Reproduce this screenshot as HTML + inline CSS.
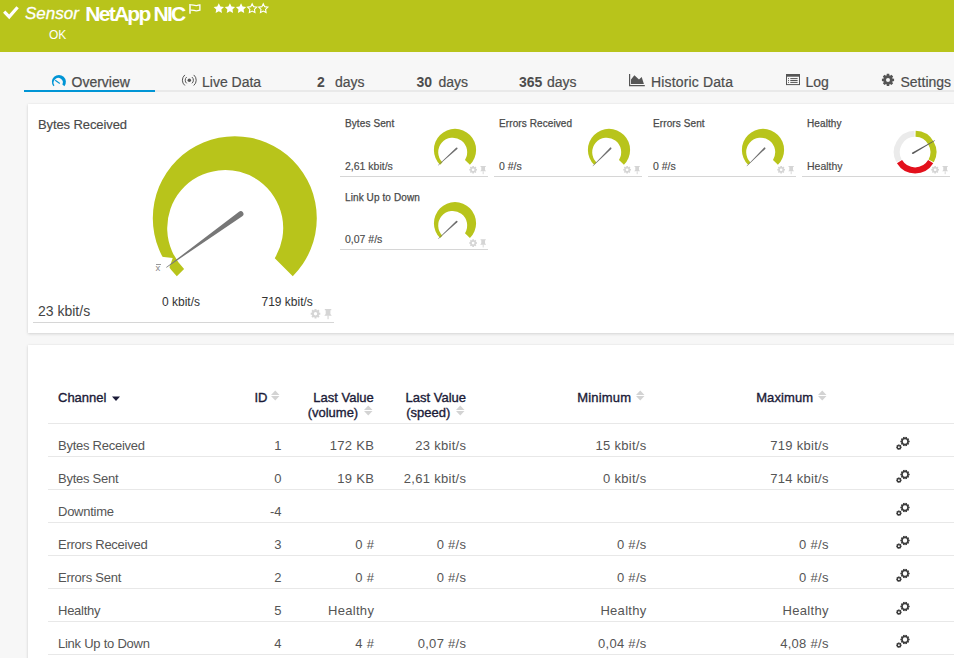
<!DOCTYPE html>
<html><head><meta charset="utf-8"><style>
html,body{margin:0;padding:0;width:954px;height:658px;overflow:hidden;background:#f7f7f7;position:relative;font-family:"Liberation Sans", sans-serif}
.t{position:absolute;white-space:nowrap;font-family:"Liberation Sans", sans-serif}
svg{position:absolute}
</style></head><body>
<div style="position:absolute;left:0px;top:0px;width:954px;height:52px;background:#b8c41b"></div>
<svg style="position:absolute;left:0px;top:0px;overflow:visible" width="30" height="30" viewBox="0 0 30 30"><polyline points="4.2,11.6 9.2,16.8 17.6,7.2" fill="none" stroke="#fff" stroke-width="3.2" stroke-linecap="butt" stroke-linejoin="miter"/></svg>
<div class="t" style="left:25px;top:4.11px;font-size:17px;line-height:20px;font-weight:400;color:#fff;font-style:italic;-webkit-text-stroke:0.3px #fff">Sensor</div>
<div class="t" style="left:85.3px;top:1.22px;font-size:21px;line-height:25px;font-weight:700;color:#fff;font-style:normal;letter-spacing:-1.75px;">NetApp NIC</div>
<svg style="position:absolute;left:0px;top:0px;overflow:visible" width="300" height="20" viewBox="0 0 300 20"><path d="M190,4 V13.8" stroke="#fff" stroke-width="1.5"/><path d="M190.5,5 C192.5,4.2 194,5.8 196.5,5.6 C198,5.5 199,4.9 199.9,4.9 V10.2 C198.5,10.6 197.5,10.9 196,10.8 C194,10.6 192.5,9.6 190.5,10.2" fill="none" stroke="#fff" stroke-width="1.3"/></svg>
<svg style="position:absolute;left:0px;top:0px;overflow:visible" width="300" height="20" viewBox="0 0 300 20"><polygon points="218.80,3.20 217.21,6.42 213.66,6.93 216.23,9.43 215.63,12.97 218.80,11.30 221.97,12.97 221.37,9.43 223.94,6.93 220.39,6.42" fill="#fff"/><polygon points="229.92,3.20 228.33,6.42 224.78,6.93 227.35,9.43 226.75,12.97 229.92,11.30 233.09,12.97 232.49,9.43 235.06,6.93 231.51,6.42" fill="#fff"/><polygon points="241.04,3.20 239.45,6.42 235.90,6.93 238.47,9.43 237.87,12.97 241.04,11.30 244.21,12.97 243.61,9.43 246.18,6.93 242.63,6.42" fill="#fff"/><polygon points="252.16,3.80 250.75,6.66 247.59,7.12 249.88,9.34 249.34,12.48 252.16,11.00 254.98,12.48 254.44,9.34 256.73,7.12 253.57,6.66" fill="none" stroke="#fff" stroke-width="1.1"/><polygon points="263.28,3.80 261.87,6.66 258.71,7.12 261.00,9.34 260.46,12.48 263.28,11.00 266.10,12.48 265.56,9.34 267.85,7.12 264.69,6.66" fill="none" stroke="#fff" stroke-width="1.1"/></svg>
<div class="t" style="left:49px;top:27.84px;font-size:12px;line-height:14px;font-weight:400;color:#fff;font-style:normal;">OK</div>
<div style="position:absolute;left:24px;top:90px;width:930px;height:2px;background:#e9e9e9"></div>
<div style="position:absolute;left:24px;top:90px;width:131px;height:2px;background:#0095d5"></div>
<svg style="position:absolute;left:0px;top:0px;overflow:visible" width="954" height="100" viewBox="0 0 954 100"><path d="M53.38,86.21 A7.0,7.0 0 1 1 64.42,86.21 L62.35,84.59 A4.6,4.6 0 1 0 54.50,85.34 Z" fill="#0095d5"/><path d="M55.2,80.2 L59.8,83.5" stroke="#0095d5" stroke-width="1.1"/></svg>
<div class="t" style="left:71.5px;top:73.65px;font-size:14px;line-height:17px;font-weight:400;color:#4d4d4d;font-style:normal;-webkit-text-stroke:0.25px #4d4d4d">Overview</div>
<svg style="position:absolute;left:0px;top:0px;overflow:visible" width="300" height="100" viewBox="0 0 300 100"><circle cx="189.3" cy="80.2" r="1.75" fill="#555"/><path d="M186.66,77.06 A4.1,4.1 0 0 0 186.66,83.34" fill="none" stroke="#555" stroke-width="1.0"/><path d="M191.94,77.06 A4.1,4.1 0 0 1 191.94,83.34" fill="none" stroke="#555" stroke-width="1.0"/><path d="M184.86,74.91 A6.9,6.9 0 0 0 184.86,85.49" fill="none" stroke="#555" stroke-width="1.0"/><path d="M193.74,74.91 A6.9,6.9 0 0 1 193.74,85.49" fill="none" stroke="#555" stroke-width="1.0"/></svg>
<div class="t" style="left:202px;top:73.65px;font-size:14px;line-height:17px;font-weight:400;color:#4d4d4d;font-style:normal;-webkit-text-stroke:0.2px #4d4d4d">Live Data</div>
<div class="t" style="left:317px;top:73.65px;font-size:14px;line-height:17px;font-weight:700;color:#4d4d4d;font-style:normal;">2</div>
<div class="t" style="left:335px;top:73.65px;font-size:14px;line-height:17px;font-weight:400;color:#4d4d4d;font-style:normal;-webkit-text-stroke:0.2px #4d4d4d">days</div>
<div class="t" style="left:416.5px;top:73.65px;font-size:14px;line-height:17px;font-weight:700;color:#4d4d4d;font-style:normal;">30</div>
<div class="t" style="left:438.5px;top:73.65px;font-size:14px;line-height:17px;font-weight:400;color:#4d4d4d;font-style:normal;-webkit-text-stroke:0.2px #4d4d4d">days</div>
<div class="t" style="left:519px;top:73.65px;font-size:14px;line-height:17px;font-weight:700;color:#4d4d4d;font-style:normal;">365</div>
<div class="t" style="left:547px;top:73.65px;font-size:14px;line-height:17px;font-weight:400;color:#4d4d4d;font-style:normal;-webkit-text-stroke:0.2px #4d4d4d">days</div>
<svg style="position:absolute;left:0px;top:0px;overflow:visible" width="954" height="100" viewBox="0 0 954 100"><path d="M629.6,74 V85.6 H644.8" fill="none" stroke="#555" stroke-width="1.2"/><path d="M631,84 V79.5 L634.4,75.3 L639,79.5 L641.7,77 L643.9,84 Z" fill="#555"/></svg>
<div class="t" style="left:651px;top:73.65px;font-size:14px;line-height:17px;font-weight:400;color:#4d4d4d;font-style:normal;letter-spacing:0.15px;-webkit-text-stroke:0.2px #4d4d4d">Historic Data</div>
<svg style="position:absolute;left:0px;top:0px;overflow:visible" width="954" height="100" viewBox="0 0 954 100"><rect x="786.5" y="74.8" width="13" height="9.8" fill="none" stroke="#555" stroke-width="1"/><rect x="786" y="74" width="14" height="2.7" fill="#555"/><rect x="788" y="78.1" width="1" height="1" fill="#666"/><rect x="790.3" y="78.1" width="7.3" height="1" fill="#555"/><rect x="788" y="80.0" width="1" height="1" fill="#666"/><rect x="790.3" y="80.0" width="7.3" height="1" fill="#555"/><rect x="788" y="81.9" width="1" height="1" fill="#666"/><rect x="790.3" y="81.9" width="7.3" height="1" fill="#555"/></svg>
<div class="t" style="left:805.5px;top:73.65px;font-size:14px;line-height:17px;font-weight:400;color:#4d4d4d;font-style:normal;-webkit-text-stroke:0.2px #4d4d4d">Log</div>
<svg style="position:absolute;left:880px;top:72px;overflow:visible" width="16" height="16" viewBox="0 0 16 16"><path d="M12.35,6.41 L14.08,6.68 L14.08,9.12 L12.35,9.39 L12.13,9.92 L13.16,11.34 L11.44,13.06 L10.02,12.03 L9.49,12.25 L9.22,13.98 L6.78,13.98 L6.51,12.25 L5.98,12.03 L4.56,13.06 L2.84,11.34 L3.87,9.92 L3.65,9.39 L1.92,9.12 L1.92,6.68 L3.65,6.41 L3.87,5.88 L2.84,4.46 L4.56,2.74 L5.98,3.77 L6.51,3.55 L6.78,1.82 L9.22,1.82 L9.49,3.55 L10.02,3.77 L11.44,2.74 L13.16,4.46 L12.13,5.88 Z M10.0,7.9 A2.0,2.0 0 1 0 6.0,7.9 A2.0,2.0 0 1 0 10.0,7.9 Z" fill="#555" fill-rule="evenodd"/></svg>
<div class="t" style="left:900.5px;top:73.65px;font-size:14px;line-height:17px;font-weight:400;color:#4d4d4d;font-style:normal;-webkit-text-stroke:0.2px #4d4d4d">Settings</div>
<div style="position:absolute;left:28px;top:104px;width:940px;height:229px;background:#fff;box-shadow:0 1px 3px rgba(0,0,0,0.14),0 0 2px rgba(0,0,0,0.04)"></div>
<div style="position:absolute;left:28px;top:345px;width:940px;height:330px;background:#fff;box-shadow:0 1px 3px rgba(0,0,0,0.14),0 0 2px rgba(0,0,0,0.04)"></div>
<div class="t" style="left:38px;top:117.00px;font-size:13px;line-height:15px;font-weight:400;color:#4a4a4a;font-style:normal;letter-spacing:-0.1px;-webkit-text-stroke:0.15px #4a4a4a">Bytes Received</div>
<svg style="position:absolute;left:0px;top:0px;overflow:visible" width="954" height="658" viewBox="0 0 954 658"><path d="M176.82,276.18 A82,82 0 1 1 292.78,276.18 L274.75,258.15 A58,58 0 1 0 184.09,268.91 Z" fill="#b8c41b"/><path d="M172.7,258.1 L159.5,256.4 L168.3,270.8 Z" fill="#fff"/><path d="M166.11,267.25 L239.01,211.72 A2.8,2.8 0 0 1 242.28,216.27 L166.41,267.65 Z" fill="#777"/></svg>
<div class="t" style="left:155.6px;top:262.21px;font-size:9.5px;line-height:11px;font-weight:400;color:#888;font-style:normal;">x</div>
<div style="position:absolute;left:155.5px;top:263.6px;width:5.5px;height:0.9px;background:#999"></div>
<div class="t" style="left:162px;top:294.84px;font-size:12px;line-height:14px;font-weight:400;color:#333;font-style:normal;">0 kbit/s</div>
<div class="t" style="left:261.5px;top:294.84px;font-size:12px;line-height:14px;font-weight:400;color:#333;font-style:normal;">719 kbit/s</div>
<div class="t" style="left:38px;top:302.65px;font-size:14px;line-height:17px;font-weight:400;color:#444;font-style:normal;">23 kbit/s</div>
<div style="position:absolute;left:33px;top:322px;width:301px;height:1px;background:#d6d6d6"></div>
<svg style="position:absolute;left:0px;top:0px;overflow:visible" width="954" height="658" viewBox="0 0 954 658"><g transform="translate(310.6,309) scale(1.0)"><path d="M8.31,3.53 L9.70,3.74 L9.70,5.66 L8.31,5.87 L8.13,6.28 L8.98,7.42 L7.62,8.78 L6.48,7.93 L6.07,8.11 L5.86,9.50 L3.94,9.50 L3.73,8.11 L3.32,7.93 L2.18,8.78 L0.82,7.42 L1.67,6.28 L1.49,5.87 L0.10,5.66 L0.10,3.74 L1.49,3.53 L1.67,3.12 L0.82,1.98 L2.18,0.62 L3.32,1.47 L3.73,1.29 L3.94,-0.10 L5.86,-0.10 L6.07,1.29 L6.48,1.47 L7.62,0.62 L8.98,1.98 L8.13,3.12 Z M6.6000000000000005,4.7 A1.7,1.7 0 1 0 3.2,4.7 A1.7,1.7 0 1 0 6.6000000000000005,4.7 Z" fill="#d5d5d5" fill-rule="evenodd"/><g transform="translate(13.7,0)"><path d="M0.5,0 H7 V1.3 H6.1 V5 L7.5,6.7 H0 L1.4,5 V1.3 H0.5 Z" fill="#d5d5d5"/><rect x="3.2" y="6.6" width="1.1" height="3.6" fill="#d5d5d5"/></g></g></svg>
<div class="t" style="left:345px;top:118.23px;font-size:10px;line-height:12px;font-weight:400;color:#4a4a4a;font-style:normal;letter-spacing:0.1px;-webkit-text-stroke:0.25px #4a4a4a">Bytes Sent</div>
<div class="t" style="left:345px;top:159.86px;font-size:10.5px;line-height:13px;font-weight:400;color:#4a4a4a;font-style:normal;-webkit-text-stroke:0.15px #4a4a4a">2,61 kbit/s</div>
<div style="position:absolute;left:340px;top:176px;width:148px;height:1px;background:#d6d6d6"></div>
<svg style="position:absolute;left:0px;top:0px;overflow:visible" width="954" height="658" viewBox="0 0 954 658"><path d="M440.08,164.82 A21.1,21.1 0 1 1 469.92,164.82 L464.99,159.89 A14.5,14.5 0 1 0 442.45,162.45 Z" fill="#b8c41b"/><path d="M437.91,165.29 L456.09,147.68 A0.9,0.9 0 0 1 457.30,149.01 L438.18,165.59 Z" fill="#6e6e6e"/></svg>
<svg style="position:absolute;left:0px;top:0px;overflow:visible" width="954" height="658" viewBox="0 0 954 658"><g transform="translate(469.2,166) scale(0.8)"><path d="M8.31,3.53 L9.70,3.74 L9.70,5.66 L8.31,5.87 L8.13,6.28 L8.98,7.42 L7.62,8.78 L6.48,7.93 L6.07,8.11 L5.86,9.50 L3.94,9.50 L3.73,8.11 L3.32,7.93 L2.18,8.78 L0.82,7.42 L1.67,6.28 L1.49,5.87 L0.10,5.66 L0.10,3.74 L1.49,3.53 L1.67,3.12 L0.82,1.98 L2.18,0.62 L3.32,1.47 L3.73,1.29 L3.94,-0.10 L5.86,-0.10 L6.07,1.29 L6.48,1.47 L7.62,0.62 L8.98,1.98 L8.13,3.12 Z M6.6000000000000005,4.7 A1.7,1.7 0 1 0 3.2,4.7 A1.7,1.7 0 1 0 6.6000000000000005,4.7 Z" fill="#d5d5d5" fill-rule="evenodd"/><g transform="translate(13.7,0)"><path d="M0.5,0 H7 V1.3 H6.1 V5 L7.5,6.7 H0 L1.4,5 V1.3 H0.5 Z" fill="#d5d5d5"/><rect x="3.2" y="6.6" width="1.1" height="3.6" fill="#d5d5d5"/></g></g></svg>
<div class="t" style="left:499px;top:118.23px;font-size:10px;line-height:12px;font-weight:400;color:#4a4a4a;font-style:normal;letter-spacing:0.1px;-webkit-text-stroke:0.25px #4a4a4a">Errors Received</div>
<div class="t" style="left:499px;top:159.86px;font-size:10.5px;line-height:13px;font-weight:400;color:#4a4a4a;font-style:normal;-webkit-text-stroke:0.15px #4a4a4a">0 #/s</div>
<div style="position:absolute;left:494px;top:176px;width:148px;height:1px;background:#d6d6d6"></div>
<svg style="position:absolute;left:0px;top:0px;overflow:visible" width="954" height="658" viewBox="0 0 954 658"><path d="M594.08,164.82 A21.1,21.1 0 1 1 623.92,164.82 L618.99,159.89 A14.5,14.5 0 1 0 596.45,162.45 Z" fill="#b8c41b"/><path d="M592.60,166.02 L609.99,147.64 A0.9,0.9 0 0 1 611.26,148.91 L592.88,166.30 Z" fill="#6e6e6e"/></svg>
<svg style="position:absolute;left:0px;top:0px;overflow:visible" width="954" height="658" viewBox="0 0 954 658"><g transform="translate(623.2,166) scale(0.8)"><path d="M8.31,3.53 L9.70,3.74 L9.70,5.66 L8.31,5.87 L8.13,6.28 L8.98,7.42 L7.62,8.78 L6.48,7.93 L6.07,8.11 L5.86,9.50 L3.94,9.50 L3.73,8.11 L3.32,7.93 L2.18,8.78 L0.82,7.42 L1.67,6.28 L1.49,5.87 L0.10,5.66 L0.10,3.74 L1.49,3.53 L1.67,3.12 L0.82,1.98 L2.18,0.62 L3.32,1.47 L3.73,1.29 L3.94,-0.10 L5.86,-0.10 L6.07,1.29 L6.48,1.47 L7.62,0.62 L8.98,1.98 L8.13,3.12 Z M6.6000000000000005,4.7 A1.7,1.7 0 1 0 3.2,4.7 A1.7,1.7 0 1 0 6.6000000000000005,4.7 Z" fill="#d5d5d5" fill-rule="evenodd"/><g transform="translate(13.7,0)"><path d="M0.5,0 H7 V1.3 H6.1 V5 L7.5,6.7 H0 L1.4,5 V1.3 H0.5 Z" fill="#d5d5d5"/><rect x="3.2" y="6.6" width="1.1" height="3.6" fill="#d5d5d5"/></g></g></svg>
<div class="t" style="left:653px;top:118.23px;font-size:10px;line-height:12px;font-weight:400;color:#4a4a4a;font-style:normal;letter-spacing:0.1px;-webkit-text-stroke:0.25px #4a4a4a">Errors Sent</div>
<div class="t" style="left:653px;top:159.86px;font-size:10.5px;line-height:13px;font-weight:400;color:#4a4a4a;font-style:normal;-webkit-text-stroke:0.15px #4a4a4a">0 #/s</div>
<div style="position:absolute;left:648px;top:176px;width:148px;height:1px;background:#d6d6d6"></div>
<svg style="position:absolute;left:0px;top:0px;overflow:visible" width="954" height="658" viewBox="0 0 954 658"><path d="M748.08,164.82 A21.1,21.1 0 1 1 777.92,164.82 L772.99,159.89 A14.5,14.5 0 1 0 750.45,162.45 Z" fill="#b8c41b"/><path d="M746.60,166.02 L763.99,147.64 A0.9,0.9 0 0 1 765.26,148.91 L746.88,166.30 Z" fill="#6e6e6e"/></svg>
<svg style="position:absolute;left:0px;top:0px;overflow:visible" width="954" height="658" viewBox="0 0 954 658"><g transform="translate(777.2,166) scale(0.8)"><path d="M8.31,3.53 L9.70,3.74 L9.70,5.66 L8.31,5.87 L8.13,6.28 L8.98,7.42 L7.62,8.78 L6.48,7.93 L6.07,8.11 L5.86,9.50 L3.94,9.50 L3.73,8.11 L3.32,7.93 L2.18,8.78 L0.82,7.42 L1.67,6.28 L1.49,5.87 L0.10,5.66 L0.10,3.74 L1.49,3.53 L1.67,3.12 L0.82,1.98 L2.18,0.62 L3.32,1.47 L3.73,1.29 L3.94,-0.10 L5.86,-0.10 L6.07,1.29 L6.48,1.47 L7.62,0.62 L8.98,1.98 L8.13,3.12 Z M6.6000000000000005,4.7 A1.7,1.7 0 1 0 3.2,4.7 A1.7,1.7 0 1 0 6.6000000000000005,4.7 Z" fill="#d5d5d5" fill-rule="evenodd"/><g transform="translate(13.7,0)"><path d="M0.5,0 H7 V1.3 H6.1 V5 L7.5,6.7 H0 L1.4,5 V1.3 H0.5 Z" fill="#d5d5d5"/><rect x="3.2" y="6.6" width="1.1" height="3.6" fill="#d5d5d5"/></g></g></svg>
<div class="t" style="left:807px;top:118.23px;font-size:10px;line-height:12px;font-weight:400;color:#4a4a4a;font-style:normal;letter-spacing:0.1px;-webkit-text-stroke:0.25px #4a4a4a">Healthy</div>
<div class="t" style="left:807px;top:159.86px;font-size:10.5px;line-height:13px;font-weight:400;color:#4a4a4a;font-style:normal;-webkit-text-stroke:0.15px #4a4a4a">Healthy</div>
<div style="position:absolute;left:802px;top:176px;width:148px;height:1px;background:#d6d6d6"></div>
<svg style="position:absolute;left:0px;top:0px;overflow:visible" width="954" height="658" viewBox="0 0 954 658"><path d="M899.02,160.83 A18.3,18.3 0 0 1 914.62,133.81" fill="none" stroke="#ebebeb" stroke-width="6"/><path d="M915.58,133.81 A18.3,18.3 0 0 1 931.18,160.83" fill="none" stroke="#b8c41b" stroke-width="6"/><path d="M930.70,161.66 A18.3,18.3 0 0 1 899.50,161.66" fill="none" stroke="#e3101c" stroke-width="6"/><path d="M934.93,140.79 L913.16,153.89 A0.85,0.85 0 0 1 912.32,152.41 L934.63,140.27 Z" fill="#5a5a5a"/></svg>
<svg style="position:absolute;left:0px;top:0px;overflow:visible" width="954" height="658" viewBox="0 0 954 658"><g transform="translate(931.2,166) scale(0.8)"><path d="M8.31,3.53 L9.70,3.74 L9.70,5.66 L8.31,5.87 L8.13,6.28 L8.98,7.42 L7.62,8.78 L6.48,7.93 L6.07,8.11 L5.86,9.50 L3.94,9.50 L3.73,8.11 L3.32,7.93 L2.18,8.78 L0.82,7.42 L1.67,6.28 L1.49,5.87 L0.10,5.66 L0.10,3.74 L1.49,3.53 L1.67,3.12 L0.82,1.98 L2.18,0.62 L3.32,1.47 L3.73,1.29 L3.94,-0.10 L5.86,-0.10 L6.07,1.29 L6.48,1.47 L7.62,0.62 L8.98,1.98 L8.13,3.12 Z M6.6000000000000005,4.7 A1.7,1.7 0 1 0 3.2,4.7 A1.7,1.7 0 1 0 6.6000000000000005,4.7 Z" fill="#d5d5d5" fill-rule="evenodd"/><g transform="translate(13.7,0)"><path d="M0.5,0 H7 V1.3 H6.1 V5 L7.5,6.7 H0 L1.4,5 V1.3 H0.5 Z" fill="#d5d5d5"/><rect x="3.2" y="6.6" width="1.1" height="3.6" fill="#d5d5d5"/></g></g></svg>
<div class="t" style="left:345px;top:191.53px;font-size:10px;line-height:12px;font-weight:400;color:#4a4a4a;font-style:normal;letter-spacing:0.1px;-webkit-text-stroke:0.25px #4a4a4a">Link Up to Down</div>
<div class="t" style="left:345px;top:233.16px;font-size:10.5px;line-height:13px;font-weight:400;color:#4a4a4a;font-style:normal;-webkit-text-stroke:0.15px #4a4a4a">0,07 #/s</div>
<div style="position:absolute;left:340px;top:249.3px;width:148px;height:1px;background:#d6d6d6"></div>
<svg style="position:absolute;left:0px;top:0px;overflow:visible" width="954" height="658" viewBox="0 0 954 658"><path d="M440.08,238.12 A21.1,21.1 0 1 1 469.92,238.12 L464.99,233.19 A14.5,14.5 0 1 0 442.45,235.75 Z" fill="#b8c41b"/><path d="M438.04,238.74 L456.07,220.97 A0.9,0.9 0 0 1 457.30,222.29 L438.32,239.03 Z" fill="#6e6e6e"/></svg>
<svg style="position:absolute;left:0px;top:0px;overflow:visible" width="954" height="658" viewBox="0 0 954 658"><g transform="translate(469.2,239.3) scale(0.8)"><path d="M8.31,3.53 L9.70,3.74 L9.70,5.66 L8.31,5.87 L8.13,6.28 L8.98,7.42 L7.62,8.78 L6.48,7.93 L6.07,8.11 L5.86,9.50 L3.94,9.50 L3.73,8.11 L3.32,7.93 L2.18,8.78 L0.82,7.42 L1.67,6.28 L1.49,5.87 L0.10,5.66 L0.10,3.74 L1.49,3.53 L1.67,3.12 L0.82,1.98 L2.18,0.62 L3.32,1.47 L3.73,1.29 L3.94,-0.10 L5.86,-0.10 L6.07,1.29 L6.48,1.47 L7.62,0.62 L8.98,1.98 L8.13,3.12 Z M6.6000000000000005,4.7 A1.7,1.7 0 1 0 3.2,4.7 A1.7,1.7 0 1 0 6.6000000000000005,4.7 Z" fill="#d5d5d5" fill-rule="evenodd"/><g transform="translate(13.7,0)"><path d="M0.5,0 H7 V1.3 H6.1 V5 L7.5,6.7 H0 L1.4,5 V1.3 H0.5 Z" fill="#d5d5d5"/><rect x="3.2" y="6.6" width="1.1" height="3.6" fill="#d5d5d5"/></g></g></svg>
<div class="t" style="left:58px;top:390.00px;font-size:13px;line-height:15px;font-weight:400;color:#1b1b38;font-style:normal;-webkit-text-stroke:0.35px #1b1b38">Channel</div>
<svg style="position:absolute;left:110.5px;top:396px;overflow:visible" width="10" height="6" viewBox="0 0 10 6"><path d="M1,0.5 H9 L5,5 Z" fill="#1b1b38"/></svg>
<div class="t" style="left:254.5px;top:390.00px;font-size:13px;line-height:15px;font-weight:400;color:#1b1b38;font-style:normal;-webkit-text-stroke:0.35px #1b1b38">ID</div>
<svg style="position:absolute;left:271px;top:390px" width="9" height="12"><path d="M0,4.9 L4.25,0.4 L8.5,4.9 Z M0,5.9 L4.25,10.6 L8.5,5.9 Z" fill="#d3d3d3"/></svg>
<div class="t" style="left:-226.2px;width:600px;text-align:right;top:390.00px;font-size:13px;line-height:15px;font-weight:400;color:#1b1b38;font-style:normal;-webkit-text-stroke:0.35px #1b1b38">Last Value</div>
<div class="t" style="left:-241.8px;width:600px;text-align:right;top:405.00px;font-size:13px;line-height:15px;font-weight:400;color:#1b1b38;font-style:normal;-webkit-text-stroke:0.35px #1b1b38">(volume)</div>
<svg style="position:absolute;left:364px;top:405px" width="9" height="12"><path d="M0,4.9 L4.25,0.4 L8.5,4.9 Z M0,5.9 L4.25,10.6 L8.5,5.9 Z" fill="#d3d3d3"/></svg>
<div class="t" style="left:-134px;width:600px;text-align:right;top:390.00px;font-size:13px;line-height:15px;font-weight:400;color:#1b1b38;font-style:normal;-webkit-text-stroke:0.35px #1b1b38">Last Value</div>
<div class="t" style="left:-149.7px;width:600px;text-align:right;top:405.00px;font-size:13px;line-height:15px;font-weight:400;color:#1b1b38;font-style:normal;-webkit-text-stroke:0.35px #1b1b38">(speed)</div>
<svg style="position:absolute;left:455.5px;top:405px" width="9" height="12"><path d="M0,4.9 L4.25,0.4 L8.5,4.9 Z M0,5.9 L4.25,10.6 L8.5,5.9 Z" fill="#d3d3d3"/></svg>
<div class="t" style="left:31.299999999999955px;width:600px;text-align:right;top:390.00px;font-size:13px;line-height:15px;font-weight:400;color:#1b1b38;font-style:normal;letter-spacing:0.2px;-webkit-text-stroke:0.35px #1b1b38">Minimum</div>
<svg style="position:absolute;left:636px;top:390px" width="9" height="12"><path d="M0,4.9 L4.25,0.4 L8.5,4.9 Z M0,5.9 L4.25,10.6 L8.5,5.9 Z" fill="#d3d3d3"/></svg>
<div class="t" style="left:213.20000000000005px;width:600px;text-align:right;top:390.00px;font-size:13px;line-height:15px;font-weight:400;color:#1b1b38;font-style:normal;letter-spacing:0.1px;-webkit-text-stroke:0.35px #1b1b38">Maximum</div>
<svg style="position:absolute;left:818px;top:390px" width="9" height="12"><path d="M0,4.9 L4.25,0.4 L8.5,4.9 Z M0,5.9 L4.25,10.6 L8.5,5.9 Z" fill="#d3d3d3"/></svg>
<div style="position:absolute;left:48px;top:423px;width:906px;height:1px;background:#e8e8e8"></div>
<div style="position:absolute;left:48px;top:456px;width:906px;height:1px;background:#e8e8e8"></div>
<div style="position:absolute;left:48px;top:489px;width:906px;height:1px;background:#e8e8e8"></div>
<div style="position:absolute;left:48px;top:522px;width:906px;height:1px;background:#e8e8e8"></div>
<div style="position:absolute;left:48px;top:555px;width:906px;height:1px;background:#e8e8e8"></div>
<div style="position:absolute;left:48px;top:588px;width:906px;height:1px;background:#e8e8e8"></div>
<div style="position:absolute;left:48px;top:621px;width:906px;height:1px;background:#e8e8e8"></div>
<div style="position:absolute;left:48px;top:654px;width:906px;height:1px;background:#e8e8e8"></div>
<div class="t" style="left:58px;top:438.00px;font-size:13px;line-height:15px;font-weight:400;color:#555;font-style:normal;letter-spacing:-0.25px;">Bytes Received</div>
<div class="t" style="left:-318.5px;width:600px;text-align:right;top:438.00px;font-size:13px;line-height:15px;font-weight:400;color:#555;font-style:normal;">1</div>
<div class="t" style="left:-225.8px;width:600px;text-align:right;top:438.00px;font-size:13px;line-height:15px;font-weight:400;color:#555;font-style:normal;letter-spacing:0.3px;">172 KB</div>
<div class="t" style="left:-133.7px;width:600px;text-align:right;top:438.00px;font-size:13px;line-height:15px;font-weight:400;color:#555;font-style:normal;letter-spacing:0.3px;">23 kbit/s</div>
<div class="t" style="left:46.60000000000002px;width:600px;text-align:right;top:438.00px;font-size:13px;line-height:15px;font-weight:400;color:#555;font-style:normal;letter-spacing:0.3px;">15 kbit/s</div>
<div class="t" style="left:228.79999999999995px;width:600px;text-align:right;top:438.00px;font-size:13px;line-height:15px;font-weight:400;color:#555;font-style:normal;letter-spacing:0.3px;">719 kbit/s</div>
<div class="t" style="left:58px;top:471.00px;font-size:13px;line-height:15px;font-weight:400;color:#555;font-style:normal;letter-spacing:-0.25px;">Bytes Sent</div>
<div class="t" style="left:-318.5px;width:600px;text-align:right;top:471.00px;font-size:13px;line-height:15px;font-weight:400;color:#555;font-style:normal;">0</div>
<div class="t" style="left:-225.8px;width:600px;text-align:right;top:471.00px;font-size:13px;line-height:15px;font-weight:400;color:#555;font-style:normal;letter-spacing:0.3px;">19 KB</div>
<div class="t" style="left:-133.7px;width:600px;text-align:right;top:471.00px;font-size:13px;line-height:15px;font-weight:400;color:#555;font-style:normal;letter-spacing:0.3px;">2,61 kbit/s</div>
<div class="t" style="left:46.60000000000002px;width:600px;text-align:right;top:471.00px;font-size:13px;line-height:15px;font-weight:400;color:#555;font-style:normal;letter-spacing:0.3px;">0 kbit/s</div>
<div class="t" style="left:228.79999999999995px;width:600px;text-align:right;top:471.00px;font-size:13px;line-height:15px;font-weight:400;color:#555;font-style:normal;letter-spacing:0.3px;">714 kbit/s</div>
<div class="t" style="left:58px;top:504.00px;font-size:13px;line-height:15px;font-weight:400;color:#555;font-style:normal;letter-spacing:-0.25px;">Downtime</div>
<div class="t" style="left:-318.5px;width:600px;text-align:right;top:504.00px;font-size:13px;line-height:15px;font-weight:400;color:#555;font-style:normal;">-4</div>
<div class="t" style="left:-225.8px;width:600px;text-align:right;top:504.00px;font-size:13px;line-height:15px;font-weight:400;color:#555;font-style:normal;letter-spacing:0.3px;"></div>
<div class="t" style="left:-133.7px;width:600px;text-align:right;top:504.00px;font-size:13px;line-height:15px;font-weight:400;color:#555;font-style:normal;letter-spacing:0.3px;"></div>
<div class="t" style="left:46.60000000000002px;width:600px;text-align:right;top:504.00px;font-size:13px;line-height:15px;font-weight:400;color:#555;font-style:normal;letter-spacing:0.3px;"></div>
<div class="t" style="left:228.79999999999995px;width:600px;text-align:right;top:504.00px;font-size:13px;line-height:15px;font-weight:400;color:#555;font-style:normal;letter-spacing:0.3px;"></div>
<div class="t" style="left:58px;top:537.00px;font-size:13px;line-height:15px;font-weight:400;color:#555;font-style:normal;letter-spacing:-0.25px;">Errors Received</div>
<div class="t" style="left:-318.5px;width:600px;text-align:right;top:537.00px;font-size:13px;line-height:15px;font-weight:400;color:#555;font-style:normal;">3</div>
<div class="t" style="left:-225.8px;width:600px;text-align:right;top:537.00px;font-size:13px;line-height:15px;font-weight:400;color:#555;font-style:normal;letter-spacing:0.3px;">0 #</div>
<div class="t" style="left:-133.7px;width:600px;text-align:right;top:537.00px;font-size:13px;line-height:15px;font-weight:400;color:#555;font-style:normal;letter-spacing:0.3px;">0 #/s</div>
<div class="t" style="left:46.60000000000002px;width:600px;text-align:right;top:537.00px;font-size:13px;line-height:15px;font-weight:400;color:#555;font-style:normal;letter-spacing:0.3px;">0 #/s</div>
<div class="t" style="left:228.79999999999995px;width:600px;text-align:right;top:537.00px;font-size:13px;line-height:15px;font-weight:400;color:#555;font-style:normal;letter-spacing:0.3px;">0 #/s</div>
<div class="t" style="left:58px;top:570.00px;font-size:13px;line-height:15px;font-weight:400;color:#555;font-style:normal;letter-spacing:-0.25px;">Errors Sent</div>
<div class="t" style="left:-318.5px;width:600px;text-align:right;top:570.00px;font-size:13px;line-height:15px;font-weight:400;color:#555;font-style:normal;">2</div>
<div class="t" style="left:-225.8px;width:600px;text-align:right;top:570.00px;font-size:13px;line-height:15px;font-weight:400;color:#555;font-style:normal;letter-spacing:0.3px;">0 #</div>
<div class="t" style="left:-133.7px;width:600px;text-align:right;top:570.00px;font-size:13px;line-height:15px;font-weight:400;color:#555;font-style:normal;letter-spacing:0.3px;">0 #/s</div>
<div class="t" style="left:46.60000000000002px;width:600px;text-align:right;top:570.00px;font-size:13px;line-height:15px;font-weight:400;color:#555;font-style:normal;letter-spacing:0.3px;">0 #/s</div>
<div class="t" style="left:228.79999999999995px;width:600px;text-align:right;top:570.00px;font-size:13px;line-height:15px;font-weight:400;color:#555;font-style:normal;letter-spacing:0.3px;">0 #/s</div>
<div class="t" style="left:58px;top:603.00px;font-size:13px;line-height:15px;font-weight:400;color:#555;font-style:normal;letter-spacing:-0.25px;">Healthy</div>
<div class="t" style="left:-318.5px;width:600px;text-align:right;top:603.00px;font-size:13px;line-height:15px;font-weight:400;color:#555;font-style:normal;">5</div>
<div class="t" style="left:-225.8px;width:600px;text-align:right;top:603.00px;font-size:13px;line-height:15px;font-weight:400;color:#555;font-style:normal;letter-spacing:0.3px;">Healthy</div>
<div class="t" style="left:-133.7px;width:600px;text-align:right;top:603.00px;font-size:13px;line-height:15px;font-weight:400;color:#555;font-style:normal;letter-spacing:0.3px;"></div>
<div class="t" style="left:46.60000000000002px;width:600px;text-align:right;top:603.00px;font-size:13px;line-height:15px;font-weight:400;color:#555;font-style:normal;letter-spacing:0.3px;">Healthy</div>
<div class="t" style="left:228.79999999999995px;width:600px;text-align:right;top:603.00px;font-size:13px;line-height:15px;font-weight:400;color:#555;font-style:normal;letter-spacing:0.3px;">Healthy</div>
<div class="t" style="left:58px;top:636.00px;font-size:13px;line-height:15px;font-weight:400;color:#555;font-style:normal;letter-spacing:-0.25px;">Link Up to Down</div>
<div class="t" style="left:-318.5px;width:600px;text-align:right;top:636.00px;font-size:13px;line-height:15px;font-weight:400;color:#555;font-style:normal;">4</div>
<div class="t" style="left:-225.8px;width:600px;text-align:right;top:636.00px;font-size:13px;line-height:15px;font-weight:400;color:#555;font-style:normal;letter-spacing:0.3px;">4 #</div>
<div class="t" style="left:-133.7px;width:600px;text-align:right;top:636.00px;font-size:13px;line-height:15px;font-weight:400;color:#555;font-style:normal;letter-spacing:0.3px;">0,07 #/s</div>
<div class="t" style="left:46.60000000000002px;width:600px;text-align:right;top:636.00px;font-size:13px;line-height:15px;font-weight:400;color:#555;font-style:normal;letter-spacing:0.3px;">0,04 #/s</div>
<div class="t" style="left:228.79999999999995px;width:600px;text-align:right;top:636.00px;font-size:13px;line-height:15px;font-weight:400;color:#555;font-style:normal;letter-spacing:0.3px;">4,08 #/s</div>
<svg style="position:absolute;left:0px;top:0px;overflow:visible" width="954" height="658" viewBox="0 0 954 658"><path d="M908.80,440.63 L909.66,440.86 L909.66,442.14 L908.80,442.37 L908.59,443.03 L909.14,443.72 L908.39,444.75 L907.56,444.44 L907.01,444.84 L907.04,445.73 L905.83,446.13 L905.34,445.38 L904.66,445.38 L904.17,446.13 L902.96,445.73 L902.99,444.84 L902.44,444.44 L901.61,444.75 L900.86,443.72 L901.41,443.03 L901.20,442.37 L900.34,442.14 L900.34,440.86 L901.20,440.63 L901.41,439.97 L900.86,439.28 L901.61,438.25 L902.44,438.56 L902.99,438.16 L902.96,437.27 L904.17,436.87 L904.66,437.62 L905.34,437.62 L905.83,436.87 L907.04,437.27 L907.01,438.16 L907.56,438.56 L908.39,438.25 L909.14,439.28 L908.59,439.97 Z M907.2,441.5 A2.2,2.2 0 1 0 902.8,441.5 A2.2,2.2 0 1 0 907.2,441.5 Z" fill="#3a3a3a" fill-rule="evenodd"/><path d="M901.01,446.59 L901.76,446.71 L901.76,447.69 L901.01,447.81 L900.83,448.26 L901.27,448.87 L900.57,449.57 L899.96,449.13 L899.51,449.31 L899.39,450.06 L898.41,450.06 L898.29,449.31 L897.84,449.13 L897.23,449.57 L896.53,448.87 L896.97,448.26 L896.79,447.81 L896.04,447.69 L896.04,446.71 L896.79,446.59 L896.97,446.14 L896.53,445.53 L897.23,444.83 L897.84,445.27 L898.29,445.09 L898.41,444.34 L899.39,444.34 L899.51,445.09 L899.96,445.27 L900.57,444.83 L901.27,445.53 L900.83,446.14 Z M899.8,447.2 A0.9,0.9 0 1 0 898.0,447.2 A0.9,0.9 0 1 0 899.8,447.2 Z" fill="#3a3a3a" fill-rule="evenodd"/><path d="M908.80,473.63 L909.66,473.86 L909.66,475.14 L908.80,475.37 L908.59,476.03 L909.14,476.72 L908.39,477.75 L907.56,477.44 L907.01,477.84 L907.04,478.73 L905.83,479.13 L905.34,478.38 L904.66,478.38 L904.17,479.13 L902.96,478.73 L902.99,477.84 L902.44,477.44 L901.61,477.75 L900.86,476.72 L901.41,476.03 L901.20,475.37 L900.34,475.14 L900.34,473.86 L901.20,473.63 L901.41,472.97 L900.86,472.28 L901.61,471.25 L902.44,471.56 L902.99,471.16 L902.96,470.27 L904.17,469.87 L904.66,470.62 L905.34,470.62 L905.83,469.87 L907.04,470.27 L907.01,471.16 L907.56,471.56 L908.39,471.25 L909.14,472.28 L908.59,472.97 Z M907.2,474.5 A2.2,2.2 0 1 0 902.8,474.5 A2.2,2.2 0 1 0 907.2,474.5 Z" fill="#3a3a3a" fill-rule="evenodd"/><path d="M901.01,479.59 L901.76,479.71 L901.76,480.69 L901.01,480.81 L900.83,481.26 L901.27,481.87 L900.57,482.57 L899.96,482.13 L899.51,482.31 L899.39,483.06 L898.41,483.06 L898.29,482.31 L897.84,482.13 L897.23,482.57 L896.53,481.87 L896.97,481.26 L896.79,480.81 L896.04,480.69 L896.04,479.71 L896.79,479.59 L896.97,479.14 L896.53,478.53 L897.23,477.83 L897.84,478.27 L898.29,478.09 L898.41,477.34 L899.39,477.34 L899.51,478.09 L899.96,478.27 L900.57,477.83 L901.27,478.53 L900.83,479.14 Z M899.8,480.2 A0.9,0.9 0 1 0 898.0,480.2 A0.9,0.9 0 1 0 899.8,480.2 Z" fill="#3a3a3a" fill-rule="evenodd"/><path d="M908.80,506.63 L909.66,506.86 L909.66,508.14 L908.80,508.37 L908.59,509.03 L909.14,509.72 L908.39,510.75 L907.56,510.44 L907.01,510.84 L907.04,511.73 L905.83,512.13 L905.34,511.38 L904.66,511.38 L904.17,512.13 L902.96,511.73 L902.99,510.84 L902.44,510.44 L901.61,510.75 L900.86,509.72 L901.41,509.03 L901.20,508.37 L900.34,508.14 L900.34,506.86 L901.20,506.63 L901.41,505.97 L900.86,505.28 L901.61,504.25 L902.44,504.56 L902.99,504.16 L902.96,503.27 L904.17,502.87 L904.66,503.62 L905.34,503.62 L905.83,502.87 L907.04,503.27 L907.01,504.16 L907.56,504.56 L908.39,504.25 L909.14,505.28 L908.59,505.97 Z M907.2,507.5 A2.2,2.2 0 1 0 902.8,507.5 A2.2,2.2 0 1 0 907.2,507.5 Z" fill="#3a3a3a" fill-rule="evenodd"/><path d="M901.01,512.59 L901.76,512.71 L901.76,513.69 L901.01,513.81 L900.83,514.26 L901.27,514.87 L900.57,515.57 L899.96,515.13 L899.51,515.31 L899.39,516.06 L898.41,516.06 L898.29,515.31 L897.84,515.13 L897.23,515.57 L896.53,514.87 L896.97,514.26 L896.79,513.81 L896.04,513.69 L896.04,512.71 L896.79,512.59 L896.97,512.14 L896.53,511.53 L897.23,510.83 L897.84,511.27 L898.29,511.09 L898.41,510.34 L899.39,510.34 L899.51,511.09 L899.96,511.27 L900.57,510.83 L901.27,511.53 L900.83,512.14 Z M899.8,513.2 A0.9,0.9 0 1 0 898.0,513.2 A0.9,0.9 0 1 0 899.8,513.2 Z" fill="#3a3a3a" fill-rule="evenodd"/><path d="M908.80,539.63 L909.66,539.86 L909.66,541.14 L908.80,541.37 L908.59,542.03 L909.14,542.72 L908.39,543.75 L907.56,543.44 L907.01,543.84 L907.04,544.73 L905.83,545.13 L905.34,544.38 L904.66,544.38 L904.17,545.13 L902.96,544.73 L902.99,543.84 L902.44,543.44 L901.61,543.75 L900.86,542.72 L901.41,542.03 L901.20,541.37 L900.34,541.14 L900.34,539.86 L901.20,539.63 L901.41,538.97 L900.86,538.28 L901.61,537.25 L902.44,537.56 L902.99,537.16 L902.96,536.27 L904.17,535.87 L904.66,536.62 L905.34,536.62 L905.83,535.87 L907.04,536.27 L907.01,537.16 L907.56,537.56 L908.39,537.25 L909.14,538.28 L908.59,538.97 Z M907.2,540.5 A2.2,2.2 0 1 0 902.8,540.5 A2.2,2.2 0 1 0 907.2,540.5 Z" fill="#3a3a3a" fill-rule="evenodd"/><path d="M901.01,545.59 L901.76,545.71 L901.76,546.69 L901.01,546.81 L900.83,547.26 L901.27,547.87 L900.57,548.57 L899.96,548.13 L899.51,548.31 L899.39,549.06 L898.41,549.06 L898.29,548.31 L897.84,548.13 L897.23,548.57 L896.53,547.87 L896.97,547.26 L896.79,546.81 L896.04,546.69 L896.04,545.71 L896.79,545.59 L896.97,545.14 L896.53,544.53 L897.23,543.83 L897.84,544.27 L898.29,544.09 L898.41,543.34 L899.39,543.34 L899.51,544.09 L899.96,544.27 L900.57,543.83 L901.27,544.53 L900.83,545.14 Z M899.8,546.2 A0.9,0.9 0 1 0 898.0,546.2 A0.9,0.9 0 1 0 899.8,546.2 Z" fill="#3a3a3a" fill-rule="evenodd"/><path d="M908.80,572.63 L909.66,572.86 L909.66,574.14 L908.80,574.37 L908.59,575.03 L909.14,575.72 L908.39,576.75 L907.56,576.44 L907.01,576.84 L907.04,577.73 L905.83,578.13 L905.34,577.38 L904.66,577.38 L904.17,578.13 L902.96,577.73 L902.99,576.84 L902.44,576.44 L901.61,576.75 L900.86,575.72 L901.41,575.03 L901.20,574.37 L900.34,574.14 L900.34,572.86 L901.20,572.63 L901.41,571.97 L900.86,571.28 L901.61,570.25 L902.44,570.56 L902.99,570.16 L902.96,569.27 L904.17,568.87 L904.66,569.62 L905.34,569.62 L905.83,568.87 L907.04,569.27 L907.01,570.16 L907.56,570.56 L908.39,570.25 L909.14,571.28 L908.59,571.97 Z M907.2,573.5 A2.2,2.2 0 1 0 902.8,573.5 A2.2,2.2 0 1 0 907.2,573.5 Z" fill="#3a3a3a" fill-rule="evenodd"/><path d="M901.01,578.59 L901.76,578.71 L901.76,579.69 L901.01,579.81 L900.83,580.26 L901.27,580.87 L900.57,581.57 L899.96,581.13 L899.51,581.31 L899.39,582.06 L898.41,582.06 L898.29,581.31 L897.84,581.13 L897.23,581.57 L896.53,580.87 L896.97,580.26 L896.79,579.81 L896.04,579.69 L896.04,578.71 L896.79,578.59 L896.97,578.14 L896.53,577.53 L897.23,576.83 L897.84,577.27 L898.29,577.09 L898.41,576.34 L899.39,576.34 L899.51,577.09 L899.96,577.27 L900.57,576.83 L901.27,577.53 L900.83,578.14 Z M899.8,579.2 A0.9,0.9 0 1 0 898.0,579.2 A0.9,0.9 0 1 0 899.8,579.2 Z" fill="#3a3a3a" fill-rule="evenodd"/><path d="M908.80,605.63 L909.66,605.86 L909.66,607.14 L908.80,607.37 L908.59,608.03 L909.14,608.72 L908.39,609.75 L907.56,609.44 L907.01,609.84 L907.04,610.73 L905.83,611.13 L905.34,610.38 L904.66,610.38 L904.17,611.13 L902.96,610.73 L902.99,609.84 L902.44,609.44 L901.61,609.75 L900.86,608.72 L901.41,608.03 L901.20,607.37 L900.34,607.14 L900.34,605.86 L901.20,605.63 L901.41,604.97 L900.86,604.28 L901.61,603.25 L902.44,603.56 L902.99,603.16 L902.96,602.27 L904.17,601.87 L904.66,602.62 L905.34,602.62 L905.83,601.87 L907.04,602.27 L907.01,603.16 L907.56,603.56 L908.39,603.25 L909.14,604.28 L908.59,604.97 Z M907.2,606.5 A2.2,2.2 0 1 0 902.8,606.5 A2.2,2.2 0 1 0 907.2,606.5 Z" fill="#3a3a3a" fill-rule="evenodd"/><path d="M901.01,611.59 L901.76,611.71 L901.76,612.69 L901.01,612.81 L900.83,613.26 L901.27,613.87 L900.57,614.57 L899.96,614.13 L899.51,614.31 L899.39,615.06 L898.41,615.06 L898.29,614.31 L897.84,614.13 L897.23,614.57 L896.53,613.87 L896.97,613.26 L896.79,612.81 L896.04,612.69 L896.04,611.71 L896.79,611.59 L896.97,611.14 L896.53,610.53 L897.23,609.83 L897.84,610.27 L898.29,610.09 L898.41,609.34 L899.39,609.34 L899.51,610.09 L899.96,610.27 L900.57,609.83 L901.27,610.53 L900.83,611.14 Z M899.8,612.2 A0.9,0.9 0 1 0 898.0,612.2 A0.9,0.9 0 1 0 899.8,612.2 Z" fill="#3a3a3a" fill-rule="evenodd"/><path d="M908.80,638.63 L909.66,638.86 L909.66,640.14 L908.80,640.37 L908.59,641.03 L909.14,641.72 L908.39,642.75 L907.56,642.44 L907.01,642.84 L907.04,643.73 L905.83,644.13 L905.34,643.38 L904.66,643.38 L904.17,644.13 L902.96,643.73 L902.99,642.84 L902.44,642.44 L901.61,642.75 L900.86,641.72 L901.41,641.03 L901.20,640.37 L900.34,640.14 L900.34,638.86 L901.20,638.63 L901.41,637.97 L900.86,637.28 L901.61,636.25 L902.44,636.56 L902.99,636.16 L902.96,635.27 L904.17,634.87 L904.66,635.62 L905.34,635.62 L905.83,634.87 L907.04,635.27 L907.01,636.16 L907.56,636.56 L908.39,636.25 L909.14,637.28 L908.59,637.97 Z M907.2,639.5 A2.2,2.2 0 1 0 902.8,639.5 A2.2,2.2 0 1 0 907.2,639.5 Z" fill="#3a3a3a" fill-rule="evenodd"/><path d="M901.01,644.59 L901.76,644.71 L901.76,645.69 L901.01,645.81 L900.83,646.26 L901.27,646.87 L900.57,647.57 L899.96,647.13 L899.51,647.31 L899.39,648.06 L898.41,648.06 L898.29,647.31 L897.84,647.13 L897.23,647.57 L896.53,646.87 L896.97,646.26 L896.79,645.81 L896.04,645.69 L896.04,644.71 L896.79,644.59 L896.97,644.14 L896.53,643.53 L897.23,642.83 L897.84,643.27 L898.29,643.09 L898.41,642.34 L899.39,642.34 L899.51,643.09 L899.96,643.27 L900.57,642.83 L901.27,643.53 L900.83,644.14 Z M899.8,645.2 A0.9,0.9 0 1 0 898.0,645.2 A0.9,0.9 0 1 0 899.8,645.2 Z" fill="#3a3a3a" fill-rule="evenodd"/></svg>
</body></html>
